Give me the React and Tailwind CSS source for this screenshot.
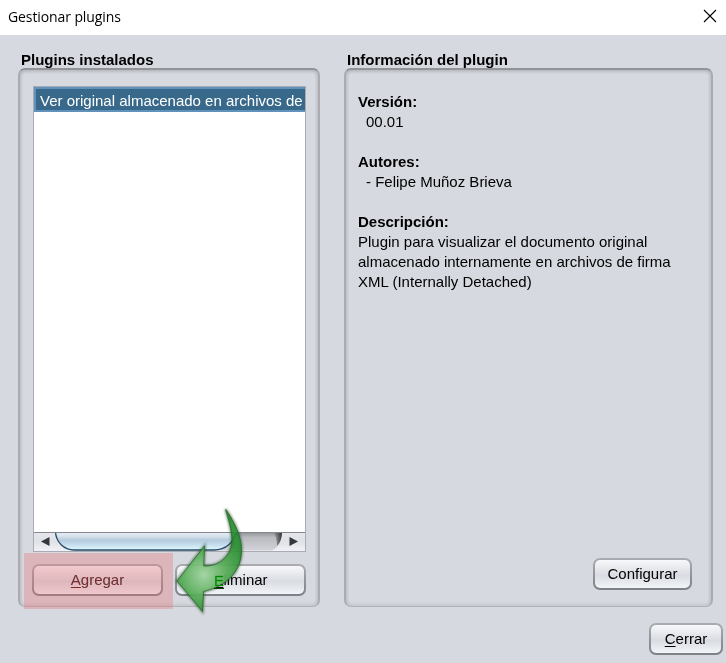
function Button({ children, className = "" }) {
  return (
    <button
      className={
        "flex h-8 items-center justify-center rounded-[7px] bg-linear-to-b from-[#aaacb1] to-[#7d8087] p-[2px] text-[15px] " +
        className
      }
    >
      <span className="flex h-full w-full items-center justify-center rounded-[5px] bg-linear-to-b from-[#f8f8fa] via-[#d9dce2] via-55% to-[#f2f4f8] whitespace-nowrap">
        <span>{children}</span>
      </span>
    </button>
  );
}

function Key({ children }) {
  return <span className="underline decoration-1 underline-offset-2">{children}</span>;
}

function Panel({ title, titleClass, className, children }) {
  return (
    <section className={"flex flex-col " + className}>
      <h2 className={"h-[18px] pl-[3px] text-[15px] leading-[20px] font-bold whitespace-nowrap " + titleClass}>
        {title}
      </h2>
      <div className="h-[539px] rounded-[7px] border-x-2 border-t-2 border-b border-x-[#aaacb1] border-t-[#919399] border-b-[#b0b2b7] shadow-[inset_0_2px_3px_#b9bbc0,inset_0_-2px_3px_#c8cad0,inset_2px_0_2px_#c8cad0,inset_-2px_0_2px_#c8cad0]">
        {children}
      </div>
    </section>
  );
}

function ScrollBar() {
  return (
    <svg className="block h-5 w-[271px]" viewBox="0 0 271 20">
      <defs>
        <linearGradient id="cap" x1="0" y1="0" x2="0" y2="1">
          <stop offset="0" stopColor="#e5e7ec" />
          <stop offset=".5" stopColor="#dfe2e6" />
          <stop offset="1" stopColor="#f1f2f5" />
        </linearGradient>
        <linearGradient id="track" x1="0" y1="0" x2="0" y2="1">
          <stop offset="0" stopColor="#8f9196" />
          <stop offset=".3" stopColor="#b9bbc0" />
          <stop offset="1" stopColor="#d1d3d8" />
        </linearGradient>
        <linearGradient id="thumb" x1="0" y1="0" x2="0" y2="1">
          <stop offset="0" stopColor="#e9eff6" />
          <stop offset=".25" stopColor="#d5e1ec" />
          <stop offset=".45" stopColor="#b3cadd" />
          <stop offset=".6" stopColor="#bdd5e6" />
          <stop offset="1" stopColor="#e0f8ff" />
        </linearGradient>
        <linearGradient id="edge">
          <stop offset="0" stopColor="#333" stopOpacity="0" />
          <stop offset="1" stopColor="#333" />
        </linearGradient>
      </defs>
      <path d="M0 0H271V20H0Z" fill="#d6d9df" />
      <path d="M0 0H271V19H0Z" fill="url(#cap)" />
      <path d="M22 0H248C248 8 245 15 238 18.500H40C28 17 22 9 22 0Z" fill="url(#track)" />
      <path d="M239 0H248C248 6 246 11 243 14C243 8 242 4 239 0Z" fill="url(#edge)" />
      <path d="M21.500 0C22 10 30 18 40 18H180C192 18 200 10 202 0Z" fill="url(#thumb)" stroke="#284b67" strokeWidth="1.300" />
      <path d="M0 .5H271" stroke="#85878e" />
      <path d="M0 19.500H271" stroke="#a8abb5" />
      <path d="M15.500 5V14L7 9.500Z" fill="#34373b" />
      <path d="M255.500 5V14L264 9.500Z" fill="#34373b" />
    </svg>
  );
}

function PointerArrow() {
  return (
    <svg className="pointer-events-none absolute top-[504px] left-[170px] h-[114px] w-[80px]" viewBox="170 504 80 114">
      <defs>
        <radialGradient id="green" gradientUnits="userSpaceOnUse" cx="204" cy="575" r="42">
          <stop offset="0" stopColor="#a0d3a0" stopOpacity=".94" />
          <stop offset=".55" stopColor="#55aa55" stopOpacity=".94" />
          <stop offset="1" stopColor="#238b2b" stopOpacity=".88" />
        </radialGradient>
        <filter id="soft" x="-20%" y="-20%" width="140%" height="140%">
          <feGaussianBlur stdDeviation=".9" />
        </filter>
      </defs>
      <path
        d="M225.700 509.500C233 520 241 534 241.500 549C242 572 226 586 203.500 591.500L202.500 611.500L177 581L204.500 546L203.700 566C221 567 232 554 232 540C232 530 228 518 225.700 509.500Z"
        fill="none"
        stroke="#1d4d22"
        strokeOpacity=".6"
        strokeWidth="2.500"
        filter="url(#soft)"
      />
      <path
        d="M225.700 509.500C233 520 241 534 241.500 549C242 572 226 586 203.500 591.500L202.500 611.500L177 581L204.500 546L203.700 566C221 567 232 554 232 540C232 530 228 518 225.700 509.500Z"
        fill="url(#green)"
        stroke="#28622c"
        strokeWidth="1"
        strokeOpacity=".75"
      />
      <text x="214" y="586" fontSize="15" fill="#008a00" className="font-['Liberation_Sans',sans-serif]" aria-hidden="true">
        E
      </text>
      <path d="M214 588.500H224" stroke="#063f08" />
    </svg>
  );
}

export default function App() {
  return (
    <div className="relative flex h-[663px] w-[726px] flex-col overflow-hidden bg-[#d6d9df] font-['Liberation_Sans',Arial,sans-serif] text-black">
      <header className="flex h-[35px] shrink-0 items-start justify-between bg-white pr-[9px] pl-2">
        <h1 className="pt-[7px] font-['Open_Sans',sans-serif] text-[14px] leading-[20px] tracking-[-0.1px]">Gestionar plugins</h1>
        <svg className="mt-[9px] h-[14px] w-[14px]" viewBox="0 0 14 14" stroke="#000" strokeWidth="1.100">
          <path d="M1 1L13 13M13 1L1 13" />
        </svg>
      </header>

      <main className="flex gap-6 pt-[15px] pl-[18px]">
        <Panel title="Plugins instalados" titleClass="" className="w-[302px]">
          <div className="flex flex-col pt-[16px] pl-[13px]">
            <div className="h-[466px] w-[273px] border border-[#a8abb5]">
              <div className="h-[445px] bg-white">
                <div className="h-[25px] overflow-hidden border-2 border-r-0 border-[#6192bb] bg-[#39698a] pl-[4px] text-[15px] leading-[23px] whitespace-nowrap text-white">
                  Ver original almacenado en archivos de firma
                </div>
              </div>
              <ScrollBar />
            </div>
            <div className="mt-[12px] -ml-px flex gap-3">
              <Button className="w-[131px]"><Key>A</Key>gregar</Button>
              <Button className="w-[131px]"><Key>E</Key>liminar</Button>
            </div>
          </div>
        </Panel>

        <Panel title="Información del plugin" titleClass="" className="w-[369px]">
          <div className="flex h-full flex-col justify-between pt-[22px] pr-[19px] pb-[16px] pl-[12px]">
            <dl className="text-[15px] leading-[20px] whitespace-nowrap">
              <dt className="font-bold">Versión:</dt>
              <dd className="mb-5 pl-2">00.01</dd>
              <dt className="font-bold">Autores:</dt>
              <dd className="mb-5 pl-2">- Felipe Muñoz Brieva</dd>
              <dt className="font-bold">Descripción:</dt>
              <dd>
                Plugin para visualizar el documento original
                <br />
                almacenado internamente en archivos de firma
                <br />
                XML (Internally Detached)
              </dd>
            </dl>
            <Button className="w-[99px] self-end">Configurar</Button>
          </div>
        </Panel>
      </main>

      <footer className="flex justify-end pt-[16px] pr-[3px]">
        <Button className="w-[74px]"><Key>C</Key>errar</Button>
      </footer>

      <div className="pointer-events-none absolute top-[553px] left-[24px] h-[56px] w-[149px] bg-[#e77377]/35" />
      <div className="pointer-events-none absolute top-[553px] left-[24px] h-[56px] w-[149px] bg-[#800000] mix-blend-lighten" />
      <PointerArrow />
    </div>
  );
}
